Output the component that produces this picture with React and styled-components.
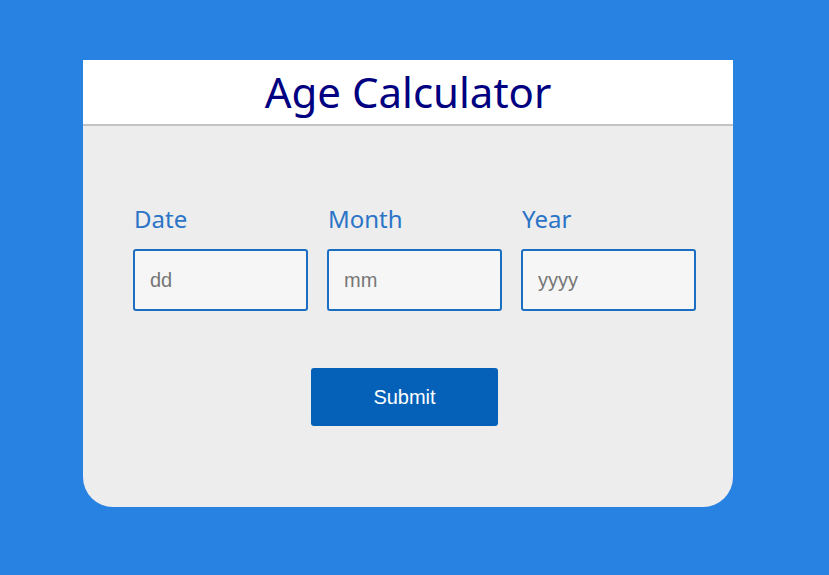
import React from "react";
import styled, { createGlobalStyle } from "styled-components";

const GlobalStyle = createGlobalStyle`
    html, body {
        margin: 0;
        padding: 0;
        background: #2882e2;
    }
    body {
        font-family: "Noto Sans", "Open Sans", sans-serif;
    }
`;

const Page = styled.div`
    min-height: 100vh;
    padding-top: 60px;
    box-sizing: border-box;
`;

const Card = styled.div`
    width: 650px;
    margin-left: 83px;
    background: #ededed;
    border-radius: 0 0 30px 30px;
    overflow: hidden;
`;

const Header = styled.div`
    height: 64px;
    background: #ffffff;
    border-bottom: 2px solid #c2c2c2;
    display: flex;
    align-items: center;
    justify-content: center;
`;

const Title = styled.h1`
    margin: 0;
    font-size: 42px;
    font-weight: 400;
    line-height: 64px;
    color: #000080;
`;

const Body = styled.div`
    padding: 78px 37px 81px 50px;
`;

const Fields = styled.div`
    display: grid;
    grid-template-columns: repeat(3, 175px);
    column-gap: 19px;
`;

const Field = styled.div`
    display: flex;
    flex-direction: column;
`;

const Label = styled.label`
    font-size: 24px;
    line-height: 30px;
    color: #2b74c7;
    margin: 0 0 15px 1px;
`;

const Input = styled.input`
    box-sizing: border-box;
    width: 175px;
    height: 62px;
    padding: 0 15px;
    border: 2px solid #1b6ec2;
    border-radius: 3px;
    background: #f6f6f6;
    font-family: "Liberation Sans", Arial, sans-serif;
    font-size: 20px;
    color: #333;
    outline: none;

    &::placeholder {
        color: #767676;
    }
`;

const Submit = styled.button`
    display: block;
    margin: 57px 0 0 178px;
    width: 187px;
    height: 58px;
    border: none;
    border-radius: 3px;
    background: #0561b7;
    color: #ffffff;
    font-family: "Liberation Sans", Arial, sans-serif;
    font-size: 20px;
    cursor: pointer;
`;

const fields = [
    { id: "date", label: "Date", placeholder: "dd" },
    { id: "month", label: "Month", placeholder: "mm" },
    { id: "year", label: "Year", placeholder: "yyyy" },
];

const App = () => {
    return (
        <Page>
            <GlobalStyle />
            <Card>
                <Header>
                    <Title>Age Calculator</Title>
                </Header>
                <Body>
                    <Fields>
                        {fields.map((f) => (
                            <Field key={f.id}>
                                <Label htmlFor={f.id}>{f.label}</Label>
                                <Input id={f.id} type="text" placeholder={f.placeholder} />
                            </Field>
                        ))}
                    </Fields>
                    <Submit>Submit</Submit>
                </Body>
            </Card>
        </Page>
    );
};

export default App;
